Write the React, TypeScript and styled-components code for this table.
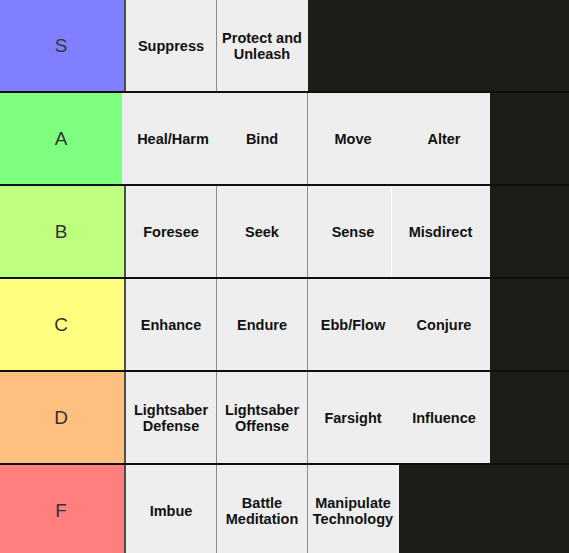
import styled, { createGlobalStyle } from 'styled-components';

const GlobalStyle = createGlobalStyle`
  html, body {
    margin: 0;
    padding: 0;
    background: #1c1c18;
    overflow: hidden;
  }
`;

type Item = { text: string; divider?: boolean; width?: number; pad?: number; ghost?: boolean };
type Tier = { label: string; color: string; noBorder?: boolean; items: Item[] };

const tiers: Tier[] = [
  {
    label: 'S',
    color: '#7f7fff',
    items: [{ text: 'Suppress', divider: true }, { text: 'Protect and Unleash' }],
  },
  {
    label: 'A',
    color: '#7fff7f',
    noBorder: true,
    items: [
      { text: 'Heal/Harm', width: 95, pad: 8 },
      { text: 'Bind', divider: true },
      { text: 'Move' },
      { text: 'Alter' },
    ],
  },
  {
    label: 'B',
    color: '#bfff7f',
    items: [
      { text: 'Foresee', divider: true },
      { text: 'Seek', divider: true },
      { text: 'Sense' },
      { text: 'Misdirect', ghost: true },
    ],
  },
  {
    label: 'C',
    color: '#ffff7f',
    items: [
      { text: 'Enhance', divider: true },
      { text: 'Endure', divider: true },
      { text: 'Ebb/Flow' },
      { text: 'Conjure' },
    ],
  },
  {
    label: 'D',
    color: '#ffbf7f',
    items: [
      { text: 'Lightsaber Defense', divider: true },
      { text: 'Lightsaber Offense', divider: true },
      { text: 'Farsight' },
      { text: 'Influence' },
    ],
  },
  {
    label: 'F',
    color: '#ff7f7f',
    items: [
      { text: 'Imbue', divider: true },
      { text: 'Battle Meditation', divider: true },
      { text: 'Manipulate Technology' },
    ],
  },
];

const App = () => {
  return (
    <>
      <GlobalStyle />
      <Board>
        {tiers.map((tier) => (
          <Row key={tier.label}>
            <Label $color={tier.color} $noBorder={tier.noBorder}>
              {tier.label}
            </Label>
            {tier.items.map((item) => (
              <Cell
                key={item.text}
                $divider={item.divider}
                $width={item.width}
                $pad={item.pad}
                $ghost={item.ghost}
              >
                {item.text}
              </Cell>
            ))}
          </Row>
        ))}
      </Board>
    </>
  );
};

const Board = styled.div`
  display: flex;
  flex-direction: column;
  width: 569px;
  height: 553px;
  overflow: hidden;
  background: #1c1c18;
`;

const Row = styled.div`
  display: flex;
  flex-shrink: 0;
  height: 91px;
  border-bottom: 2px solid #0f0f0d;
`;

const Label = styled.div<{ $color: string; $noBorder?: boolean }>`
  display: flex;
  align-items: center;
  justify-content: center;
  box-sizing: border-box;
  width: ${(p) => (p.$noBorder ? '122px' : '126px')};
  padding-right: ${(p) => (p.$noBorder ? '0' : '2px')};
  border-right: ${(p) => (p.$noBorder ? 'none' : '2px solid #4d4d4a')};
  background: ${(p) => p.$color};
  color: #333;
  font-family: 'Liberation Sans', Arial, sans-serif;
  font-size: 19px;
`;

const Cell = styled.div<{ $divider?: boolean; $width?: number; $pad?: number; $ghost?: boolean }>`
  position: relative;
  display: flex;
  align-items: center;
  justify-content: center;
  box-sizing: border-box;
  width: ${(p) => (p.$ghost ? 99 : p.$width ?? 91)}px;
  margin-left: ${(p) => (p.$ghost ? '-8px' : '0')};
  padding-left: ${(p) => p.$pad ?? 0}px;
  border-left: ${(p) => (p.$ghost ? '1px solid #ffffff' : 'none')};
  border-right: 1px solid ${(p) => (p.$divider ? '#8c8c8c' : '#eeeeee')};
  background: #eeeeee;
  color: #111;
  font-family: 'Liberation Sans', Arial, sans-serif;
  font-weight: bold;
  font-size: 14.5px;
  line-height: 16px;
  text-align: center;
`;

export default App;
